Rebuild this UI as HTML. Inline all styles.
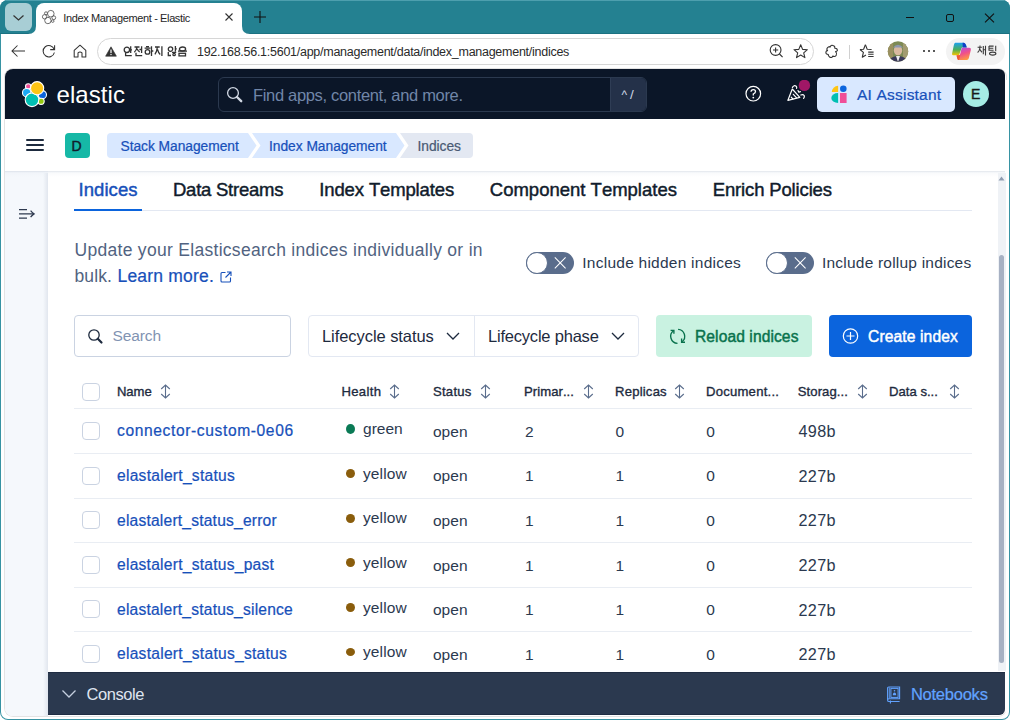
<!DOCTYPE html>
<html><head><meta charset="utf-8"><style>
html,body{margin:0;padding:0;width:1010px;height:720px;overflow:hidden;background:#fff;}
body{position:relative;font-family:"Liberation Sans",sans-serif;}
.t{position:absolute;white-space:pre;font-kerning:none;}
.r{position:absolute;display:block;}
</style></head><body>
<div class="r" style="left:0px;top:0px;width:1010px;height:720px;background:#3793a3;border-radius:8px;"></div>
<div class="r" style="left:0px;top:0px;width:1010px;height:34px;background:#248191;border-radius:8px 8px 0 0;"></div>
<div class="r" style="left:6px;top:0px;width:998px;height:1px;background:#4d9fae;"></div>
<div class="r" style="left:0px;top:33px;width:1010px;height:1px;background:#1b7181;"></div>
<div class="r" style="left:1px;top:34px;width:1008px;height:685px;background:#ffffff;border-radius:0 0 7px 7px;"></div>
<div class="r" style="left:5px;top:3px;width:27px;height:28px;background:#a8ced5;border-radius:6px;"></div>
<svg class="r" style="left:5px;top:3px;" width="27" height="28" viewBox="0 0 27 28"><path d="M8.5 12.5 L13.5 17 L18.5 12.5" fill="none" stroke="#333" stroke-width="1.2"/></svg>
<div class="r" style="left:36px;top:3px;width:206px;height:32px;background:#fff;border-radius:8px 8px 0 0;"></div>
<svg class="r" style="left:28px;top:26px;" width="8" height="8" viewBox="0 0 8 8"><path d="M0 8 Q8 8 8 0 L8 8 Z" fill="#fff"/></svg>
<svg class="r" style="left:242px;top:26px;" width="8" height="8" viewBox="0 0 8 8"><path d="M8 8 Q0 8 0 0 L0 8 Z" fill="#fff"/></svg>
<svg class="r" style="left:41px;top:9px;" width="16" height="16" viewBox="0 0 16 16"><g fill="none" stroke="#555" stroke-width="0.85"><circle cx="9.8" cy="4.7" r="3.3"/><circle cx="5" cy="4.3" r="1.5"/><circle cx="3.6" cy="7.8" r="2.2"/><circle cx="6.9" cy="11.5" r="3.2"/><circle cx="12.8" cy="8.7" r="1.9"/><circle cx="11.7" cy="12.1" r="1.3"/></g></svg>
<div class="t" style="left:63.30px;top:12.69px;font-size:11px;line-height:11px;color:#262626;font-weight:400;letter-spacing:-0.376px;">Index Management - Elastic</div>
<svg class="r" style="left:222px;top:10px;" width="14" height="14" viewBox="0 0 14 14"><path d="M3.5 3.5 L10.5 10.5 M10.5 3.5 L3.5 10.5" stroke="#333" stroke-width="1.1"/></svg>
<svg class="r" style="left:252px;top:9px;" width="16" height="16" viewBox="0 0 16 16"><path d="M8 2 V14 M2 8 H14" stroke="#111" stroke-width="1.1"/></svg>
<div class="r" style="left:906px;top:16.5px;width:8px;height:1.5px;background:#111;"></div>
<div class="r" style="left:945.5px;top:13.5px;width:8.5px;height:8.5px;border:1.3px solid #111;border-radius:2px;box-sizing:border-box;"></div>
<svg class="r" style="left:984px;top:13px;" width="11" height="10" viewBox="0 0 11 10"><path d="M1 0.7 L10 9.4 M10 0.7 L1 9.4" stroke="#111" stroke-width="1.15"/></svg>
<svg class="r" style="left:10px;top:43px;" width="17" height="16" viewBox="0 0 17 16"><path d="M15 8 H2 M7.5 2.5 L2 8 L7.5 13.5" fill="none" stroke="#333" stroke-width="1.05"/></svg>
<svg class="r" style="left:41px;top:43px;" width="16" height="16" viewBox="0 0 16 16"><path d="M13.2 6.2 A5.7 5.7 0 1 0 13.4 9.5" fill="none" stroke="#333" stroke-width="1.05"/><path d="M13.6 2.2 V6.6 H9.2" fill="none" stroke="#333" stroke-width="1.05"/></svg>
<svg class="r" style="left:72px;top:43px;" width="16" height="16" viewBox="0 0 16 16"><path d="M2.2 7.3 L8 2.2 L13.8 7.3 V14 H10 V9.8 Q8 8.2 6 9.8 V14 H2.2 Z" fill="none" stroke="#333" stroke-width="1.05" stroke-linejoin="round"/></svg>
<div class="r" style="left:97px;top:38px;width:717px;height:27px;border:1px solid #d6d6d6;border-radius:14px;box-sizing:border-box;background:#fff;"></div>
<svg class="r" style="left:105px;top:46px;" width="12" height="11" viewBox="0 0 12 11"><path d="M6 0.8 L11.4 10.2 H0.6 Z" fill="#333" stroke="#333" stroke-width="0.6" stroke-linejoin="round"/><path d="M6 3.6 V7" stroke="#fff" stroke-width="1.2"/><circle cx="6" cy="8.5" r="0.7" fill="#fff"/></svg>
<svg class="r" style="left:123px;top:45.5px;" width="70" height="12" viewBox="0 0 70 12"><g fill="none" stroke="#333" stroke-width="1.3"><circle cx="3.9" cy="3.8" r="2.7"/><path d="M7.7 0.3 V7 M7.7 3.8 H9 M2.6 6.8 V9.6 H8.8"/><path d="M11.5 1 H16.5 M14 1 Q13.4 4.6 11.3 6.2 M14.1 2.8 Q15 5 16.7 6 M16.4 3.5 H18.6 M18.6 0.3 V7 M13 6.8 V9.6 H19.2"/><path d="M23 0.6 H26 M21.6 2.2 H27.5 M28.5 0.3 V10 M28.5 5 H30.3"/><circle cx="24.5" cy="5.9" r="2.3"/><path d="M32 1 H36.7 M34.4 1 Q33.8 6 31.9 8.4 M34.5 3.5 Q35.5 7 37.2 8.4 M38.9 0.3 V10"/><circle cx="47.5" cy="3.1" r="2.2"/><path d="M52.4 0 V5.5 M52.4 2.8 H53.8 M45.3 6 V9.5 H48 M49 6.3 H53.2"/><circle cx="51.1" cy="8.5" r="1.2"/><ellipse cx="59.5" cy="3" rx="3.1" ry="2"/><path d="M55 5.1 H64"/><rect x="56" y="7.3" width="6.5" height="2.6"/></g></svg>
<div class="t" style="left:197.00px;top:45.72px;font-size:12.5px;line-height:12.5px;color:#2a2a2a;font-weight:400;letter-spacing:-0.265px;">192.168.56.1:5601/app/management/data/index_management/indices</div>
<svg class="r" style="left:767px;top:42px;" width="18" height="18" viewBox="0 0 18 18"><circle cx="8.6" cy="8" r="5.4" fill="none" stroke="#333" stroke-width="1.1"/><path d="M12.5 12 L15.6 15.2 M8.6 5.4 V10.6 M6 8 H11.2" stroke="#333" stroke-width="1.1"/></svg>
<svg class="r" style="left:792px;top:43px;" width="18" height="17" viewBox="0 0 18 17"><path d="M8.7 1.8 L10.6 6.4 L15.4 6.7 L11.7 9.8 L12.9 14.6 L8.7 12 L4.5 14.6 L5.7 9.8 L2 6.7 L6.8 6.4 Z" fill="none" stroke="#333" stroke-width="1.1" stroke-linejoin="round"/></svg>
<svg class="r" style="left:823px;top:43px;" width="18" height="17" viewBox="0 0 18 17"><path d="M4.8 4.5 Q6 3 7 4.2 Q8 1.6 10 2.6 Q12.3 3.4 11.8 5.2 Q14.2 5 14.5 7.2 Q14.2 8.4 12.6 8.6 Q14.4 10.3 13.2 12.3 Q11.7 14.3 9.8 13 Q8.8 15.4 6.6 14 Q4.9 12.6 5.3 11.5 Q2.8 11.4 2.9 9.2 Q3.2 7.4 4.6 7.6 Q3 6 4.8 4.5 Z" fill="none" stroke="#333" stroke-width="1.1" stroke-linejoin="round"/></svg>
<div class="r" style="left:849px;top:45px;width:1px;height:14px;background:#d0d0d0;"></div>
<svg class="r" style="left:858px;top:43px;" width="18" height="17" viewBox="0 0 18 17"><path d="M7.4 1.8 L9.2 6.2 L13.6 6.5 M2 6.5 L5.4 9.4 L4.3 14.2 L8 12" fill="none" stroke="#333" stroke-width="1.1" stroke-linejoin="round"/><path d="M7.4 1.8 L5.6 6.2 L2 6.5" fill="none" stroke="#333" stroke-width="1.1" stroke-linejoin="round"/><path d="M10.2 9.1 H15.6 M10.2 11.3 H15.6 M10.2 13.5 H15.6" stroke="#333" stroke-width="1.1"/></svg>
<svg class="r" style="left:887px;top:41px;" width="22" height="22" viewBox="0 0 22 22"><defs><clipPath id="av"><circle cx="11" cy="10.5" r="10.2"/></clipPath></defs><g clip-path="url(#av)"><rect width="22" height="22" fill="#7d8a55"/><rect x="0" y="0" width="6" height="22" fill="#9a9060"/><rect x="16" y="0" width="6" height="22" fill="#a29b70"/><ellipse cx="11" cy="9.5" rx="4.2" ry="4.8" fill="#d9b9a0"/><path d="M6 6.5 Q11 0.8 16 6.5 Z" fill="#8d97b0"/><path d="M1 22 Q3 15 11 15 Q19 15 21 22 Z" fill="#3b3a5a"/><path d="M9 15 L11 21 L13 15 Z" fill="#eee"/></g></svg>
<div class="r" style="left:923px;top:50px;width:2px;height:2px;background:#222;border-radius:1px;"></div>
<div class="r" style="left:928px;top:50px;width:2px;height:2px;background:#222;border-radius:1px;"></div>
<div class="r" style="left:933px;top:50px;width:2px;height:2px;background:#222;border-radius:1px;"></div>
<div class="r" style="left:946px;top:38px;width:59px;height:27px;background:#f3f3f3;border-radius:14px;"></div>
<svg class="r" style="left:951px;top:42px;" width="21" height="20" viewBox="0 0 21 20"><defs><linearGradient id="cg1" x1="0" y1="0" x2="0" y2="1"><stop offset="0" stop-color="#1aa0f0"/><stop offset="0.55" stop-color="#4aae5a"/><stop offset="1" stop-color="#f5c400"/></linearGradient><linearGradient id="cg2" x1="0.2" y1="0" x2="0.6" y2="1"><stop offset="0" stop-color="#b050e8"/><stop offset="0.5" stop-color="#f0508a"/><stop offset="1" stop-color="#ff9a40"/></linearGradient></defs><path d="M4.2 0.7 H12.5 Q14.8 0.9 15.7 5.6 H11.5 Q10.6 5.6 10.2 7 L8.2 12.8 Q8 13.2 7.5 13.2 H2 Q0.8 13.2 1.1 11.6 L2.8 3.2 Q3.3 0.7 4.2 0.7 Z" fill="url(#cg1)"/><path d="M11.6 0.8 H12.5 Q14.8 0.9 15.7 5.6 H11.8 Z" fill="#1040c8"/><path d="M11.2 5.7 H18.3 Q20.3 5.7 19.9 7.8 L17.8 16.3 Q17.4 18 15.8 18 H7.5 Q6.2 18 5.6 13.2 H7.7 Q8.8 13.2 9.2 12 L10.4 7 Q10.7 5.7 11.2 5.7 Z" fill="url(#cg2)"/><path d="M5.6 13.2 H9.2 L8 18 H7.5 Q6.2 18 5.6 13.2 Z" fill="#f05a30"/></svg>
<svg class="r" style="left:977px;top:45.2px;" width="20" height="12" viewBox="0 0 20 12"><g fill="none" stroke="#3a3a3a" stroke-width="1.1"><path d="M2.5 1.1 H3.5 M0.6 2.3 H4.9 M2.8 2.3 V3.5 Q2.4 6 0.6 7.5 M3.1 4.6 Q4 6.5 5 7.3 M6.3 0.9 V9.3 M6.3 4.8 H8.5 M8.5 0.7 V10.4"/><path d="M12 1.1 H16.6 M12 1.1 V5.2 H16.6 M12 3.2 H16.3 M18.7 0.7 V6.3"/><ellipse cx="15.7" cy="8.6" rx="3.2" ry="1.5"/></g></svg>
<div class="r" style="left:5px;top:69px;width:1001px;height:647px;background:#fff;border-radius:8px;box-shadow:0 0 0 1px #e3e3e3;"></div>
<div class="r" style="left:5px;top:69px;width:1000px;height:50px;background:#0b1628;border-radius:8px 6px 0 0;"></div>
<svg class="r" style="left:22px;top:81px;" width="27" height="27" viewBox="0 0 27 27"><g stroke="#fff" stroke-width="1.1"><circle cx="6.2" cy="5.4" r="2.7" fill="#f04e98"/><circle cx="4.7" cy="11.7" r="4.2" fill="#1ba9f5"/><circle cx="20.4" cy="13.7" r="4.1" fill="#0b64dd"/><circle cx="19.1" cy="20.3" r="3.1" fill="#93c90e"/><circle cx="10" cy="18.8" r="6.8" fill="#00bfb3"/><circle cx="15.1" cy="7.2" r="6.6" fill="#fec514"/></g></svg>
<div class="t" style="left:56.50px;top:83.18px;font-size:24px;line-height:24px;color:#ffffff;font-weight:400;letter-spacing:0.075px;">elastic</div>
<div class="r" style="left:218px;top:77px;width:429px;height:35px;border:1px solid #2b394f;border-radius:6px;box-sizing:border-box;"></div>
<div class="r" style="left:610px;top:78px;width:36px;height:33px;background:#243149;border-left:1px solid #2f3d55;box-sizing:border-box;border-radius:0 5px 5px 0;"></div>
<svg class="r" style="left:225px;top:85px;" width="20" height="20" viewBox="0 0 20 20"><circle cx="8" cy="8" r="5.4" fill="none" stroke="#d0d7e3" stroke-width="1.3"/><path d="M12 12 L16.2 16.2" stroke="#d0d7e3" stroke-width="2.4" stroke-linecap="round"/></svg>
<div class="t" style="left:253.00px;top:86.53px;font-size:16.5px;line-height:16.5px;color:#7186a8;font-weight:400;letter-spacing:-0.329px;">Find apps, content, and more.</div>
<div class="t" style="left:621.50px;top:88.84px;font-size:12px;line-height:12px;color:#d0d8e6;font-weight:400;letter-spacing:0.000px;">^</div>
<div class="t" style="left:630.00px;top:88.07px;font-size:13.5px;line-height:13.5px;color:#d0d8e6;font-weight:400;letter-spacing:0.000px;">/</div>
<svg class="r" style="left:744px;top:85px;" width="18" height="18" viewBox="0 0 18 18"><circle cx="9.3" cy="8.7" r="7.3" fill="none" stroke="#fff" stroke-width="1.2"/><path d="M7 6.8 Q7 4.6 9.3 4.6 Q11.5 4.6 11.5 6.6 Q11.5 8 9.3 9 V10.5" fill="none" stroke="#fff" stroke-width="1.3"/><circle cx="9.3" cy="12.6" r="0.9" fill="#fff"/></svg>
<svg class="r" style="left:785px;top:80px;" width="26" height="24" viewBox="0 0 26 24"><g fill="none" stroke="#fff" stroke-width="1.2" stroke-linejoin="round" stroke-linecap="round"><path d="M2.9 20.3 L7.3 9 L14.8 17.4 Z"/><path d="M8.3 14.3 L11.4 17.6 M6.2 17.2 L7.9 19"/><path d="M7.4 7.4 Q9 4.6 11.2 6.2 Q12 7 11.6 8.4"/><path d="M13 10.6 L13.8 12.2 L15.4 11.6"/><path d="M15.8 15 Q18 14 19.2 15.5 Q19.8 17 18.6 18.4"/></g><circle cx="19.4" cy="5.4" r="5.7" fill="#a01766"/></svg>
<div class="r" style="left:817px;top:77px;width:138px;height:35px;background:#d9e8ff;border-radius:5px;"></div>
<svg class="r" style="left:831px;top:85px;" width="18" height="19" viewBox="0 0 18 19"><path d="M7.1 0.8 V7.1 H0.8 A6.3 6.3 0 0 1 7.1 0.8 Z" fill="#fec514"/><circle cx="12.3" cy="3.75" r="3.3" fill="#0b64dd"/><path d="M7.1 8 V18 A6.8 5 0 0 1 7.1 8 Z" fill="#00bfb3"/><rect x="9" y="8" width="6.6" height="10" fill="#f04e98"/></svg>
<div class="t" style="left:857.00px;top:86.58px;font-size:15.5px;line-height:15.5px;color:#1750ba;font-weight:400;letter-spacing:0.200px;-webkit-text-stroke:0.225px #1750ba;">AI Assistant</div>
<div class="r" style="left:963px;top:81px;width:26px;height:26px;background:#a6ede6;border-radius:50%;"></div>
<div class="t" style="left:971.00px;top:87.15px;font-size:14px;line-height:14px;color:#1a1a1a;font-weight:400;letter-spacing:0.000px;-webkit-text-stroke:0.45px #1a1a1a;">E</div>
<div class="r" style="left:5px;top:119px;width:1000px;height:52px;background:#fff;"></div>
<div class="r" style="left:26px;top:139px;width:18px;height:2px;background:#1d2a3e;border-radius:1px;"></div>
<div class="r" style="left:26px;top:144px;width:18px;height:2px;background:#1d2a3e;border-radius:1px;"></div>
<div class="r" style="left:26px;top:149px;width:18px;height:2px;background:#1d2a3e;border-radius:1px;"></div>
<div class="r" style="left:65px;top:133px;width:25px;height:25px;background:#16b8a6;border-radius:4px;"></div>
<div class="t" style="left:71.50px;top:138.65px;font-size:14px;line-height:14px;color:#111c2c;font-weight:400;letter-spacing:0.000px;-webkit-text-stroke:0.45px #111c2c;">D</div>
<svg class="r" style="left:107px;top:133px;" width="370" height="25" viewBox="0 0 370 25"><path d="M4 0 H141 L149.5 12.5 L141 25 H4 Q0 25 0 21 V4 Q0 0 4 0 Z" fill="#d9e8ff"/><path d="M145 0 H289 L297.5 12.5 L289 25 H145 L153.5 12.5 Z" fill="#d9e8ff"/><path d="M293 0 H362 Q366 0 366 4 V21 Q366 25 362 25 H293 L301.5 12.5 Z" fill="#e3e8f2"/></svg>
<div class="t" style="left:120.50px;top:139.62px;font-size:13.8px;line-height:13.8px;color:#1750ba;font-weight:400;letter-spacing:-0.043px;-webkit-text-stroke:0.225px #1750ba;">Stack Management</div>
<div class="t" style="left:269.00px;top:139.62px;font-size:13.8px;line-height:13.8px;color:#1750ba;font-weight:400;letter-spacing:-0.030px;-webkit-text-stroke:0.225px #1750ba;">Index Management</div>
<div class="t" style="left:417.50px;top:139.62px;font-size:13.8px;line-height:13.8px;color:#4a5a74;font-weight:400;letter-spacing:-0.050px;-webkit-text-stroke:0.225px #4a5a74;">Indices</div>
<div class="r" style="left:5px;top:171px;width:43px;height:545px;background:#f5f8fc;border-radius:0 0 0 8px;"></div>
<div class="r" style="left:43px;top:173px;width:5px;height:543px;background:linear-gradient(90deg,rgba(225,230,238,0),#e1e6ee);"></div>
<svg class="r" style="left:17px;top:207px;" width="20" height="14" viewBox="0 0 20 14"><path d="M2 2.6 H10 M2 11.2 H10 M2 6.9 H16" stroke="#2e3a4f" stroke-width="1.3"/><path d="M13.6 3.6 Q15.6 6 17 6.9 Q15.6 7.8 13.6 10.2" fill="none" stroke="#2e3a4f" stroke-width="1.3"/></svg>
<div class="r" style="left:5px;top:171px;width:1000px;height:6px;background:linear-gradient(rgba(200,208,220,0.55),rgba(230,235,242,0.25) 30%,rgba(255,255,255,0));"></div>
<div class="r" style="left:1005px;top:80px;width:3px;height:632px;background:#fff;"></div>
<div class="r" style="left:998px;top:173px;width:7.5px;height:498px;background:#eff2f6;"></div>
<svg class="r" style="left:997px;top:173px;" width="9" height="10" viewBox="0 0 9 10"><path d="M4.5 3.5 L7.5 7.5 H1.5 Z" fill="#8f9bb0"/></svg>
<div class="r" style="left:999px;top:255px;width:5px;height:408px;background:#a7b1c3;border-radius:3px;"></div>
<div class="t" style="left:78.60px;top:180.84px;font-size:18.5px;line-height:18.5px;color:#1750ba;font-weight:400;letter-spacing:0.042px;-webkit-text-stroke:0.45px #1750ba;">Indices</div>
<div class="t" style="left:173.00px;top:180.84px;font-size:18.5px;line-height:18.5px;color:#111c2c;font-weight:400;letter-spacing:-0.241px;-webkit-text-stroke:0.45px #111c2c;">Data Streams</div>
<div class="t" style="left:319.30px;top:180.84px;font-size:18.5px;line-height:18.5px;color:#111c2c;font-weight:400;letter-spacing:-0.136px;-webkit-text-stroke:0.45px #111c2c;">Index Templates</div>
<div class="t" style="left:489.80px;top:180.84px;font-size:18.5px;line-height:18.5px;color:#111c2c;font-weight:400;letter-spacing:0.000px;-webkit-text-stroke:0.45px #111c2c;">Component Templates</div>
<div class="t" style="left:712.80px;top:180.84px;font-size:18.5px;line-height:18.5px;color:#111c2c;font-weight:400;letter-spacing:-0.154px;-webkit-text-stroke:0.45px #111c2c;">Enrich Policies</div>
<div class="r" style="left:74px;top:210px;width:898px;height:1px;background:#e3e8f2;"></div>
<div class="r" style="left:74px;top:209px;width:68px;height:2px;background:#0b64dd;"></div>
<div class="t" style="left:74.50px;top:242.18px;font-size:17.5px;line-height:17.5px;color:#516381;font-weight:400;letter-spacing:0.296px;">Update your Elasticsearch indices individually or in</div>
<div class="t" style="left:74.50px;top:268.18px;font-size:17.5px;line-height:17.5px;color:#516381;font-weight:400;letter-spacing:0.125px;">bulk.</div>
<div class="t" style="left:117.50px;top:268.18px;font-size:17.5px;line-height:17.5px;color:#1750ba;font-weight:400;letter-spacing:0.200px;-webkit-text-stroke:0.225px #1750ba;">Learn more.</div>
<svg class="r" style="left:219px;top:270px;" width="14" height="14" viewBox="0 0 14 14"><path d="M6.5 2.5 H3 Q2 2.5 2 3.5 V11 Q2 12 3 12 H10.5 Q11.5 12 11.5 11 V7.5" fill="none" stroke="#1750ba" stroke-width="1.1"/><path d="M8 2 H12 V6 M12 2 L6.5 7.5" fill="none" stroke="#1750ba" stroke-width="1.1"/></svg>
<div class="r" style="left:526px;top:252px;width:48px;height:22px;background:#5a6d8c;border-radius:11px;"></div>
<div class="r" style="left:526px;top:252px;width:22px;height:22px;background:#fff;border:1px solid #5a6d8c;border-radius:50%;box-sizing:border-box;"></div>
<svg class="r" style="left:553px;top:256px;" width="14" height="14" viewBox="0 0 14 14"><path d="M1.8 1.4 L12.6 12.4 M12.6 1.4 L1.8 12.4" stroke="#fff" stroke-width="1.05"/></svg>
<div class="t" style="left:582.30px;top:254.58px;font-size:15.5px;line-height:15.5px;color:#2b394f;font-weight:400;letter-spacing:0.245px;">Include hidden indices</div>
<div class="r" style="left:766px;top:252px;width:48px;height:22px;background:#5a6d8c;border-radius:11px;"></div>
<div class="r" style="left:766px;top:252px;width:22px;height:22px;background:#fff;border:1px solid #5a6d8c;border-radius:50%;box-sizing:border-box;"></div>
<svg class="r" style="left:793px;top:256px;" width="14" height="14" viewBox="0 0 14 14"><path d="M1.8 1.4 L12.6 12.4 M12.6 1.4 L1.8 12.4" stroke="#fff" stroke-width="1.05"/></svg>
<div class="t" style="left:822.00px;top:254.58px;font-size:15.5px;line-height:15.5px;color:#2b394f;font-weight:400;letter-spacing:0.212px;">Include rollup indices</div>
<div class="r" style="left:74px;top:315px;width:217px;height:42px;border:1px solid #cad3e2;border-radius:4px;box-sizing:border-box;background:#fff;"></div>
<svg class="r" style="left:86px;top:327px;" width="20" height="20" viewBox="0 0 20 20"><circle cx="8" cy="8" r="5.2" fill="none" stroke="#1d2a3e" stroke-width="1.3"/><path d="M11.8 11.8 L15.5 15.5" stroke="#1d2a3e" stroke-width="2.2" stroke-linecap="round"/></svg>
<div class="t" style="left:112.50px;top:328.48px;font-size:15.5px;line-height:15.5px;color:#8193b2;font-weight:400;letter-spacing:-0.110px;">Search</div>
<div class="r" style="left:308px;top:315px;width:331px;height:42px;border:1px solid #e3e8f2;border-radius:4px;box-sizing:border-box;"></div>
<div class="r" style="left:474px;top:315px;width:1px;height:42px;background:#e3e8f2;"></div>
<div class="t" style="left:322.00px;top:328.03px;font-size:16.5px;line-height:16.5px;color:#1d2a3e;font-weight:400;letter-spacing:-0.063px;">Lifecycle status</div>
<div class="t" style="left:488.00px;top:328.03px;font-size:16.5px;line-height:16.5px;color:#1d2a3e;font-weight:400;letter-spacing:-0.207px;">Lifecycle phase</div>
<svg class="r" style="left:445px;top:329px;" width="16" height="14" viewBox="0 0 16 14"><path d="M2 4 L8 10 L14 4" fill="none" stroke="#1d2a3e" stroke-width="1.3"/></svg>
<svg class="r" style="left:610px;top:329px;" width="16" height="14" viewBox="0 0 16 14"><path d="M2 4 L8 10 L14 4" fill="none" stroke="#1d2a3e" stroke-width="1.3"/></svg>
<div class="r" style="left:656px;top:315px;width:156px;height:42px;background:#c9f2e1;border-radius:4px;"></div>
<svg class="r" style="left:667px;top:327px;" width="20" height="20" viewBox="0 0 20 20"><g fill="none" stroke="#09724d" stroke-width="1.35"><path d="M6.8 3.5 A7 7 0 0 0 10.5 16.3"/><path d="M3.6 3.3 H6.9 V6.7"/><path d="M11.1 2.3 A7 7 0 0 1 15 14.8"/><path d="M14.6 11.4 V15.2 H18"/></g></svg>
<div class="t" style="left:695.00px;top:329.39px;font-size:15.6px;line-height:15.6px;color:#09724d;font-weight:400;letter-spacing:0.088px;-webkit-text-stroke:0.45px #09724d;">Reload indices</div>
<div class="r" style="left:829px;top:315px;width:143px;height:42px;background:#0b64dd;border-radius:4px;"></div>
<svg class="r" style="left:841px;top:326px;" width="20" height="20" viewBox="0 0 20 20"><circle cx="9.5" cy="10" r="7.2" fill="none" stroke="#fff" stroke-width="1.2"/><path d="M9.5 6 V14 M5.5 10 H13.5" stroke="#fff" stroke-width="1.2"/></svg>
<div class="t" style="left:868.00px;top:329.39px;font-size:15.6px;line-height:15.6px;color:#ffffff;font-weight:400;letter-spacing:0.127px;-webkit-text-stroke:0.45px #ffffff;">Create index</div>
<div class="r" style="left:82px;top:383px;width:18px;height:18px;border:1px solid #cad3e2;border-radius:4px;box-sizing:border-box;background:#fff;"></div>
<div class="t" style="left:117.00px;top:385.11px;font-size:13.1px;line-height:13.1px;color:#1d2a3e;font-weight:400;letter-spacing:-0.083px;-webkit-text-stroke:0.35px #1d2a3e;">Name</div>
<svg class="r" style="left:160px;top:384px;" width="11" height="15" viewBox="0 0 11 15"><path d="M5.5 1.2 V13.8 M1.2 5 L5.5 1 L9.8 5 M1.2 10 L5.5 14 L9.8 10" fill="none" stroke="#5a6d8c" stroke-width="1.1"/></svg>
<div class="t" style="left:341.40px;top:385.11px;font-size:13.1px;line-height:13.1px;color:#1d2a3e;font-weight:400;letter-spacing:0.340px;-webkit-text-stroke:0.35px #1d2a3e;">Health</div>
<svg class="r" style="left:389px;top:384px;" width="11" height="15" viewBox="0 0 11 15"><path d="M5.5 1.2 V13.8 M1.2 5 L5.5 1 L9.8 5 M1.2 10 L5.5 14 L9.8 10" fill="none" stroke="#5a6d8c" stroke-width="1.1"/></svg>
<div class="t" style="left:432.90px;top:385.11px;font-size:13.1px;line-height:13.1px;color:#1d2a3e;font-weight:400;letter-spacing:0.280px;-webkit-text-stroke:0.35px #1d2a3e;">Status</div>
<svg class="r" style="left:480px;top:384px;" width="11" height="15" viewBox="0 0 11 15"><path d="M5.5 1.2 V13.8 M1.2 5 L5.5 1 L9.8 5 M1.2 10 L5.5 14 L9.8 10" fill="none" stroke="#5a6d8c" stroke-width="1.1"/></svg>
<div class="t" style="left:524.00px;top:385.11px;font-size:13.1px;line-height:13.1px;color:#1d2a3e;font-weight:400;letter-spacing:0.062px;-webkit-text-stroke:0.35px #1d2a3e;">Primar...</div>
<svg class="r" style="left:583px;top:384px;" width="11" height="15" viewBox="0 0 11 15"><path d="M5.5 1.2 V13.8 M1.2 5 L5.5 1 L9.8 5 M1.2 10 L5.5 14 L9.8 10" fill="none" stroke="#5a6d8c" stroke-width="1.1"/></svg>
<div class="t" style="left:615.00px;top:385.11px;font-size:13.1px;line-height:13.1px;color:#1d2a3e;font-weight:400;letter-spacing:0.207px;-webkit-text-stroke:0.35px #1d2a3e;">Replicas</div>
<svg class="r" style="left:674px;top:384px;" width="11" height="15" viewBox="0 0 11 15"><path d="M5.5 1.2 V13.8 M1.2 5 L5.5 1 L9.8 5 M1.2 10 L5.5 14 L9.8 10" fill="none" stroke="#5a6d8c" stroke-width="1.1"/></svg>
<div class="t" style="left:706.00px;top:385.11px;font-size:13.1px;line-height:13.1px;color:#1d2a3e;font-weight:400;letter-spacing:0.230px;-webkit-text-stroke:0.35px #1d2a3e;">Document...</div>
<div class="t" style="left:797.80px;top:385.11px;font-size:13.1px;line-height:13.1px;color:#1d2a3e;font-weight:400;letter-spacing:0.075px;-webkit-text-stroke:0.35px #1d2a3e;">Storag...</div>
<svg class="r" style="left:857px;top:384px;" width="11" height="15" viewBox="0 0 11 15"><path d="M5.5 1.2 V13.8 M1.2 5 L5.5 1 L9.8 5 M1.2 10 L5.5 14 L9.8 10" fill="none" stroke="#5a6d8c" stroke-width="1.1"/></svg>
<div class="t" style="left:889.00px;top:385.11px;font-size:13.1px;line-height:13.1px;color:#1d2a3e;font-weight:400;letter-spacing:0.019px;-webkit-text-stroke:0.35px #1d2a3e;">Data s...</div>
<svg class="r" style="left:949px;top:384px;" width="11" height="15" viewBox="0 0 11 15"><path d="M5.5 1.2 V13.8 M1.2 5 L5.5 1 L9.8 5 M1.2 10 L5.5 14 L9.8 10" fill="none" stroke="#5a6d8c" stroke-width="1.1"/></svg>
<div class="r" style="left:74px;top:408px;width:898px;height:1px;background:#e9edf3;"></div>
<div class="r" style="left:82px;top:422px;width:18px;height:18px;border:1px solid #cad3e2;border-radius:4px;box-sizing:border-box;background:#fff;"></div>
<div class="t" style="left:117.00px;top:423.39px;font-size:15.6px;line-height:15.6px;color:#1750ba;font-weight:400;letter-spacing:0.615px;-webkit-text-stroke:0.225px #1750ba;">connector-custom-0e06</div>
<div class="r" style="left:345.5px;top:424px;width:9.0px;height:10px;background:#0a7a55;border-radius:50%;"></div>
<div class="t" style="left:363.00px;top:421.28px;font-size:15.5px;line-height:15.5px;color:#2b394f;font-weight:400;letter-spacing:0.013px;">green</div>
<div class="t" style="left:432.90px;top:423.88px;font-size:15.5px;line-height:15.5px;color:#2b394f;font-weight:400;letter-spacing:0.100px;">open</div>
<div class="t" style="left:525.00px;top:423.88px;font-size:15.5px;line-height:15.5px;color:#2b394f;font-weight:400;letter-spacing:0.000px;">2</div>
<div class="t" style="left:615.40px;top:423.88px;font-size:15.5px;line-height:15.5px;color:#2b394f;font-weight:400;letter-spacing:0.000px;">0</div>
<div class="t" style="left:706.30px;top:423.88px;font-size:15.5px;line-height:15.5px;color:#2b394f;font-weight:400;letter-spacing:0.000px;">0</div>
<div class="t" style="left:798.40px;top:423.28px;font-size:16.2px;line-height:16.2px;color:#2b394f;font-weight:400;letter-spacing:0.367px;">498b</div>
<div class="r" style="left:74px;top:453px;width:898px;height:1px;background:#e9edf3;"></div>
<div class="r" style="left:82px;top:467px;width:18px;height:18px;border:1px solid #cad3e2;border-radius:4px;box-sizing:border-box;background:#fff;"></div>
<div class="t" style="left:117.00px;top:467.99px;font-size:15.6px;line-height:15.6px;color:#1750ba;font-weight:400;letter-spacing:0.263px;-webkit-text-stroke:0.225px #1750ba;">elastalert_status</div>
<div class="r" style="left:345.5px;top:469px;width:9.0px;height:9px;background:#8a5d0c;border-radius:50%;"></div>
<div class="t" style="left:363.00px;top:465.88px;font-size:15.5px;line-height:15.5px;color:#2b394f;font-weight:400;letter-spacing:0.120px;">yellow</div>
<div class="t" style="left:432.90px;top:468.48px;font-size:15.5px;line-height:15.5px;color:#2b394f;font-weight:400;letter-spacing:0.100px;">open</div>
<div class="t" style="left:525.00px;top:468.48px;font-size:15.5px;line-height:15.5px;color:#2b394f;font-weight:400;letter-spacing:0.000px;">1</div>
<div class="t" style="left:615.40px;top:468.48px;font-size:15.5px;line-height:15.5px;color:#2b394f;font-weight:400;letter-spacing:0.000px;">1</div>
<div class="t" style="left:706.30px;top:468.48px;font-size:15.5px;line-height:15.5px;color:#2b394f;font-weight:400;letter-spacing:0.000px;">0</div>
<div class="t" style="left:798.40px;top:467.88px;font-size:16.2px;line-height:16.2px;color:#2b394f;font-weight:400;letter-spacing:0.367px;">227b</div>
<div class="r" style="left:74px;top:498px;width:898px;height:1px;background:#e9edf3;"></div>
<div class="r" style="left:82px;top:511px;width:18px;height:18px;border:1px solid #cad3e2;border-radius:4px;box-sizing:border-box;background:#fff;"></div>
<div class="t" style="left:117.00px;top:512.59px;font-size:15.6px;line-height:15.6px;color:#1750ba;font-weight:400;letter-spacing:0.205px;-webkit-text-stroke:0.225px #1750ba;">elastalert_status_error</div>
<div class="r" style="left:345.5px;top:514px;width:9.0px;height:9px;background:#8a5d0c;border-radius:50%;"></div>
<div class="t" style="left:363.00px;top:510.48px;font-size:15.5px;line-height:15.5px;color:#2b394f;font-weight:400;letter-spacing:0.120px;">yellow</div>
<div class="t" style="left:432.90px;top:513.08px;font-size:15.5px;line-height:15.5px;color:#2b394f;font-weight:400;letter-spacing:0.100px;">open</div>
<div class="t" style="left:525.00px;top:513.08px;font-size:15.5px;line-height:15.5px;color:#2b394f;font-weight:400;letter-spacing:0.000px;">1</div>
<div class="t" style="left:615.40px;top:513.08px;font-size:15.5px;line-height:15.5px;color:#2b394f;font-weight:400;letter-spacing:0.000px;">1</div>
<div class="t" style="left:706.30px;top:513.08px;font-size:15.5px;line-height:15.5px;color:#2b394f;font-weight:400;letter-spacing:0.000px;">0</div>
<div class="t" style="left:798.40px;top:512.48px;font-size:16.2px;line-height:16.2px;color:#2b394f;font-weight:400;letter-spacing:0.367px;">227b</div>
<div class="r" style="left:74px;top:542px;width:898px;height:1px;background:#e9edf3;"></div>
<div class="r" style="left:82px;top:556px;width:18px;height:18px;border:1px solid #cad3e2;border-radius:4px;box-sizing:border-box;background:#fff;"></div>
<div class="t" style="left:117.00px;top:557.19px;font-size:15.6px;line-height:15.6px;color:#1750ba;font-weight:400;letter-spacing:0.245px;-webkit-text-stroke:0.225px #1750ba;">elastalert_status_past</div>
<div class="r" style="left:345.5px;top:558px;width:9.0px;height:9px;background:#8a5d0c;border-radius:50%;"></div>
<div class="t" style="left:363.00px;top:555.08px;font-size:15.5px;line-height:15.5px;color:#2b394f;font-weight:400;letter-spacing:0.120px;">yellow</div>
<div class="t" style="left:432.90px;top:557.68px;font-size:15.5px;line-height:15.5px;color:#2b394f;font-weight:400;letter-spacing:0.100px;">open</div>
<div class="t" style="left:525.00px;top:557.68px;font-size:15.5px;line-height:15.5px;color:#2b394f;font-weight:400;letter-spacing:0.000px;">1</div>
<div class="t" style="left:615.40px;top:557.68px;font-size:15.5px;line-height:15.5px;color:#2b394f;font-weight:400;letter-spacing:0.000px;">1</div>
<div class="t" style="left:706.30px;top:557.68px;font-size:15.5px;line-height:15.5px;color:#2b394f;font-weight:400;letter-spacing:0.000px;">0</div>
<div class="t" style="left:798.40px;top:557.08px;font-size:16.2px;line-height:16.2px;color:#2b394f;font-weight:400;letter-spacing:0.367px;">227b</div>
<div class="r" style="left:74px;top:587px;width:898px;height:1px;background:#e9edf3;"></div>
<div class="r" style="left:82px;top:600px;width:18px;height:18px;border:1px solid #cad3e2;border-radius:4px;box-sizing:border-box;background:#fff;"></div>
<div class="t" style="left:117.00px;top:601.79px;font-size:15.6px;line-height:15.6px;color:#1750ba;font-weight:400;letter-spacing:0.208px;-webkit-text-stroke:0.225px #1750ba;">elastalert_status_silence</div>
<div class="r" style="left:345.5px;top:603px;width:9.0px;height:9px;background:#8a5d0c;border-radius:50%;"></div>
<div class="t" style="left:363.00px;top:599.68px;font-size:15.5px;line-height:15.5px;color:#2b394f;font-weight:400;letter-spacing:0.120px;">yellow</div>
<div class="t" style="left:432.90px;top:602.28px;font-size:15.5px;line-height:15.5px;color:#2b394f;font-weight:400;letter-spacing:0.100px;">open</div>
<div class="t" style="left:525.00px;top:602.28px;font-size:15.5px;line-height:15.5px;color:#2b394f;font-weight:400;letter-spacing:0.000px;">1</div>
<div class="t" style="left:615.40px;top:602.28px;font-size:15.5px;line-height:15.5px;color:#2b394f;font-weight:400;letter-spacing:0.000px;">1</div>
<div class="t" style="left:706.30px;top:602.28px;font-size:15.5px;line-height:15.5px;color:#2b394f;font-weight:400;letter-spacing:0.000px;">0</div>
<div class="t" style="left:798.40px;top:601.68px;font-size:16.2px;line-height:16.2px;color:#2b394f;font-weight:400;letter-spacing:0.367px;">227b</div>
<div class="r" style="left:74px;top:631px;width:898px;height:1px;background:#e9edf3;"></div>
<div class="r" style="left:82px;top:645px;width:18px;height:18px;border:1px solid #cad3e2;border-radius:4px;box-sizing:border-box;background:#fff;"></div>
<div class="t" style="left:117.00px;top:646.39px;font-size:15.6px;line-height:15.6px;color:#1750ba;font-weight:400;letter-spacing:0.261px;-webkit-text-stroke:0.225px #1750ba;">elastalert_status_status</div>
<div class="r" style="left:345.5px;top:648px;width:9.0px;height:8px;background:#8a5d0c;border-radius:50%;"></div>
<div class="t" style="left:363.00px;top:644.28px;font-size:15.5px;line-height:15.5px;color:#2b394f;font-weight:400;letter-spacing:0.120px;">yellow</div>
<div class="t" style="left:432.90px;top:646.88px;font-size:15.5px;line-height:15.5px;color:#2b394f;font-weight:400;letter-spacing:0.100px;">open</div>
<div class="t" style="left:525.00px;top:646.88px;font-size:15.5px;line-height:15.5px;color:#2b394f;font-weight:400;letter-spacing:0.000px;">1</div>
<div class="t" style="left:615.40px;top:646.88px;font-size:15.5px;line-height:15.5px;color:#2b394f;font-weight:400;letter-spacing:0.000px;">1</div>
<div class="t" style="left:706.30px;top:646.88px;font-size:15.5px;line-height:15.5px;color:#2b394f;font-weight:400;letter-spacing:0.000px;">0</div>
<div class="t" style="left:798.40px;top:646.28px;font-size:16.2px;line-height:16.2px;color:#2b394f;font-weight:400;letter-spacing:0.367px;">227b</div>
<div class="r" style="left:48px;top:672px;width:957px;height:43px;background:#2b394f;border-top:1px solid #1f2c42;border-bottom:1px solid #1f2c42;box-sizing:border-box;border-radius:0 0 6px 0;"></div>
<svg class="r" style="left:60px;top:686px;" width="18" height="14" viewBox="0 0 18 14"><path d="M2.5 4.5 L9 11 L15.5 4.5" fill="none" stroke="#c5cfdf" stroke-width="1.3"/></svg>
<div class="t" style="left:86.50px;top:685.73px;font-size:16.5px;line-height:16.5px;color:#dfe5ef;font-weight:400;letter-spacing:-0.450px;">Console</div>
<svg class="r" style="left:885px;top:685px;" width="17" height="19" viewBox="0 0 17 19"><g fill="none" stroke="#61a2ff"><path d="M2.6 15 V3.2 Q2.6 2 3.8 2 H14.6 V13.8 H4 Q2.6 13.8 2.6 15.2 Q2.6 16.5 4 16.5 H14.6" stroke-width="1.1"/><path d="M4.3 2.5 V13.3" stroke-width="0.9"/><rect x="5.9" y="3.4" width="7.2" height="9" stroke-width="1"/><path d="M5.4 15.4 V18.4" stroke-width="1.1"/></g><circle cx="9.5" cy="5.7" r="0.8" fill="#61a2ff"/><path d="M7.8 10.3 Q7.8 7.4 9.5 7.4 Q11.2 7.4 11.2 10.3 Z" fill="#61a2ff"/></svg>
<div class="t" style="left:910.90px;top:686.23px;font-size:16.5px;line-height:16.5px;color:#61a2ff;font-weight:400;letter-spacing:-0.237px;-webkit-text-stroke:0.225px #61a2ff;">Notebooks</div>
</body></html>
